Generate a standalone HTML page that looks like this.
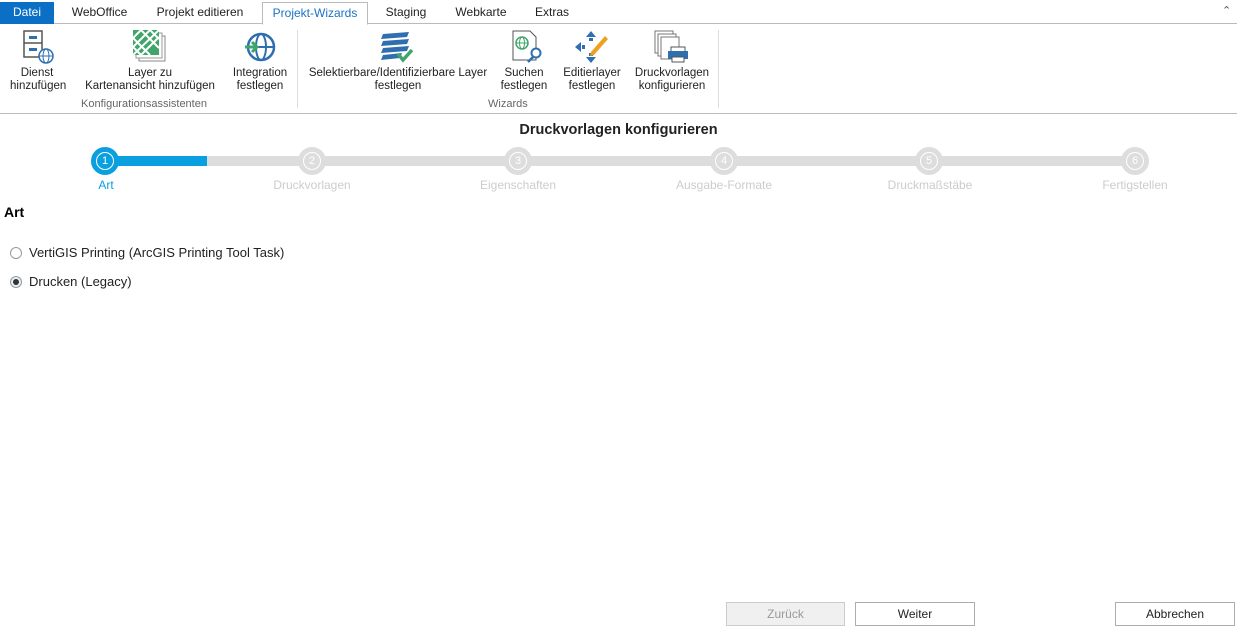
<!DOCTYPE html><html><head><meta charset="utf-8"><style>
*{margin:0;padding:0;box-sizing:border-box}
body{width:1237px;height:631px;background:#fff;font-family:"Liberation Sans",sans-serif;font-size:12px;color:#222;position:relative;overflow:hidden}
.a{position:absolute;white-space:nowrap}
.tab{position:absolute;top:2px;height:22px;line-height:21px;font-size:12px;text-align:center}
.lbl{position:absolute;text-align:center;font-size:11.5px;line-height:13px;color:#222;white-space:nowrap}
.grp{position:absolute;top:98px;font-size:11px;color:#666}
.c{position:absolute;top:147px;width:28px;height:28px;border-radius:50%;background:#ddd;color:#fff;font-size:11px;text-align:center;border:5px solid #ddd}
.c i{display:block;width:18px;height:18px;border-radius:50%;border:1.5px solid #fff;font-style:normal;line-height:16px;margin:0}
.sl{position:absolute;top:178px;font-size:12px;color:#ccc;transform:translateX(-50%)}
.btn{position:absolute;top:602px;height:24px;border:1px solid #adadad;background:#fff;text-align:center;line-height:22px;font-size:12px}
</style></head><body>
<div class="a" style="left:0;top:23px;width:1237px;height:1px;background:#bbb"></div>
<div class="tab" style="left:0;width:54px;background:#0b6fc6;color:#fff;top:2px;height:22px">Datei</div>
<div class="tab" style="left:62px;width:75px">WebOffice</div>
<div class="tab" style="left:146px;width:108px">Projekt editieren</div>
<div class="tab" style="left:262px;width:106px;border:1px solid #bbb;border-bottom:1px solid #fff;background:#fff;color:#1a73c4;height:23px">Projekt-Wizards</div>
<div class="tab" style="left:376px;width:60px">Staging</div>
<div class="tab" style="left:446px;width:70px">Webkarte</div>
<div class="tab" style="left:526px;width:52px">Extras</div>
<div class="a" style="left:1222px;top:4px;font-size:11px;color:#555">&#8963;</div>
<svg class="a" style="left:22px;top:30px" width="34" height="34"><rect x="2" y="1" width="18" height="26" fill="#fff" stroke="#555" stroke-width="1.5"/><line x1="2" y1="13" x2="20" y2="13" stroke="#555" stroke-width="1.5"/><rect x="7" y="6" width="8" height="3" fill="#2f6fb0"/><rect x="7" y="18" width="8" height="3" fill="#2f6fb0"/><circle cx="24" cy="26" r="7" fill="#fff" stroke="#2f6fb0" stroke-width="1.5"/><line x1="17" y1="26" x2="31" y2="26" stroke="#2f6fb0"/><ellipse cx="24" cy="26" rx="3" ry="7" fill="none" stroke="#2f6fb0"/></svg>
<svg class="a" style="left:133px;top:30px" width="34" height="32"><rect x="6" y="6" width="26" height="25" fill="none" stroke="#888"/><rect x="3" y="3" width="26" height="25" fill="#fff" stroke="#999"/><rect x="0" y="0" width="26" height="25" fill="#3fa56a"/><path d="M0 8 L17 25 M0 17 L8 25 M8 0 L26 18 M17 0 L26 9 M0 17 L17 0 M0 25 L26 0 M8 25 L26 7 M0 8 L8 0" stroke="#fff" stroke-width="2"/></svg>
<svg class="a" style="left:244px;top:31px" width="34" height="32"><circle cx="17" cy="16" r="13" fill="none" stroke="#2f6fb0" stroke-width="2.5"/><ellipse cx="17" cy="16" rx="5" ry="13" fill="none" stroke="#2f6fb0" stroke-width="2"/><line x1="4" y1="16" x2="30" y2="16" stroke="#2f6fb0" stroke-width="2"/><path d="M1 16 H12 M8 11 L13 16 L8 21" stroke="#3fa56a" stroke-width="3" fill="none"/></svg>
<svg class="a" style="left:380px;top:30px" width="34" height="34"><g fill="#2f6fb0"><path d="M3 4 L29 2 L27 7 L1 9Z"/><path d="M3 11 L29 9 L27 14 L1 16Z"/><path d="M3 18 L29 16 L27 21 L1 23Z"/><path d="M3 25 L22 23 L20 28 L1 30Z"/></g><path d="M18 24 L23 30 L32 20" stroke="#3fa56a" stroke-width="3.5" fill="none"/></svg>
<svg class="a" style="left:508px;top:30px" width="36" height="34"><path d="M5 1 H22 L28 7 V30 H5Z" fill="#fff" stroke="#555"/><circle cx="14" cy="13" r="6" fill="none" stroke="#3fa56a" stroke-width="1.5"/><line x1="8" y1="13" x2="20" y2="13" stroke="#3fa56a"/><ellipse cx="14" cy="13" rx="2.5" ry="6" fill="none" stroke="#3fa56a"/><circle cx="28" cy="23" r="4.5" fill="#fff" stroke="#2f6fb0" stroke-width="2"/><line x1="25" y1="27" x2="20" y2="32" stroke="#2f6fb0" stroke-width="2.5"/></svg>
<svg class="a" style="left:574px;top:30px" width="36" height="34"><g fill="#2f6fb0"><path d="M17 1 L22 7 H12Z"/><path d="M17 33 L22 27 H12Z"/><path d="M1 17 L7 12 V22Z"/><rect x="15" y="8" width="4" height="3"/><rect x="15" y="23" width="4" height="3"/><rect x="8" y="15" width="3" height="4"/></g><path d="M17 22 L31 6 L34 9 L20 25 L16 26Z" fill="#f0a020"/></svg>
<svg class="a" style="left:654px;top:30px" width="36" height="34"><rect x="1" y="1" width="18" height="22" fill="#fff" stroke="#777"/><rect x="4" y="4" width="18" height="22" fill="#fff" stroke="#777"/><rect x="7" y="7" width="18" height="22" fill="#fff" stroke="#777"/><rect x="17" y="17" width="14" height="5" fill="#fff" stroke="#555"/><rect x="14" y="21" width="20" height="8" fill="#2f6fb0"/><rect x="18" y="27" width="12" height="5" fill="#fff" stroke="#555"/></svg>
<div class="lbl" style="left:10px;top:67px;width:54px">Dienst<br>hinzufügen</div>
<div class="lbl" style="left:78px;top:67px;width:144px">Layer zu<br>Kartenansicht hinzufügen</div>
<div class="lbl" style="left:228px;top:67px;width:64px">Integration<br>festlegen</div>
<div class="grp" style="left:81px">Konfigurationsassistenten</div>
<div class="a" style="left:297px;top:30px;width:1px;height:78px;background:#ddd"></div>
<div class="lbl" style="left:305px;top:67px;width:186px">Selektierbare/Identifizierbare Layer<br>festlegen</div>
<div class="lbl" style="left:497px;top:67px;width:54px">Suchen<br>festlegen</div>
<div class="lbl" style="left:560px;top:67px;width:64px">Editierlayer<br>festlegen</div>
<div class="lbl" style="left:630px;top:67px;width:84px">Druckvorlagen<br>konfigurieren</div>
<div class="grp" style="left:488px">Wizards</div>
<div class="a" style="left:718px;top:30px;width:1px;height:78px;background:#ddd"></div>
<div class="a" style="left:0;top:113px;width:1237px;height:1px;background:#bbb"></div>
<div class="a" style="left:0;top:122px;width:1237px;text-align:center;font-weight:bold;font-size:14.5px">Druckvorlagen konfigurieren</div>
<div class="a" style="left:105px;top:156px;width:1030px;height:10px;background:#ddd"></div>
<div class="a" style="left:105px;top:156px;width:102px;height:10px;background:#0aa0e0"></div>
<div class="c" style="left:91px;background:#0aa0e0;border-color:#0aa0e0"><i>1</i></div>
<div class="c" style="left:298px"><i>2</i></div>
<div class="c" style="left:504px"><i>3</i></div>
<div class="c" style="left:710px"><i>4</i></div>
<div class="c" style="left:915px"><i>5</i></div>
<div class="c" style="left:1121px"><i>6</i></div>
<div class="sl" style="left:106px;color:#0aa0e0">Art</div>
<div class="sl" style="left:312px">Druckvorlagen</div>
<div class="sl" style="left:518px">Eigenschaften</div>
<div class="sl" style="left:724px">Ausgabe-Formate</div>
<div class="sl" style="left:930px">Druckmaßstäbe</div>
<div class="sl" style="left:1135px">Fertigstellen</div>
<div class="a" style="left:4px;top:204px;font-weight:bold;font-size:14px;color:#000">Art</div>
<div class="a" style="left:10px;top:247px;width:12px;height:12px;border:1px solid #999;border-radius:50%"></div>
<div class="a" style="left:29px;top:245px;font-size:13px">VertiGIS Printing (ArcGIS Printing Tool Task)</div>
<div class="a" style="left:10px;top:276px;width:12px;height:12px;border:1px solid #999;border-radius:50%;background:#e6f0fa"><div style="width:6px;height:6px;background:#333;border-radius:50%;margin:2px"></div></div>
<div class="a" style="left:29px;top:274px;font-size:13px">Drucken (Legacy)</div>
<div class="btn" style="left:726px;width:119px;background:#f0f0f0;border-color:#ccc;color:#999">Zurück</div>
<div class="btn" style="left:855px;width:120px">Weiter</div>
<div class="btn" style="left:1115px;width:120px">Abbrechen</div>
</body></html>
